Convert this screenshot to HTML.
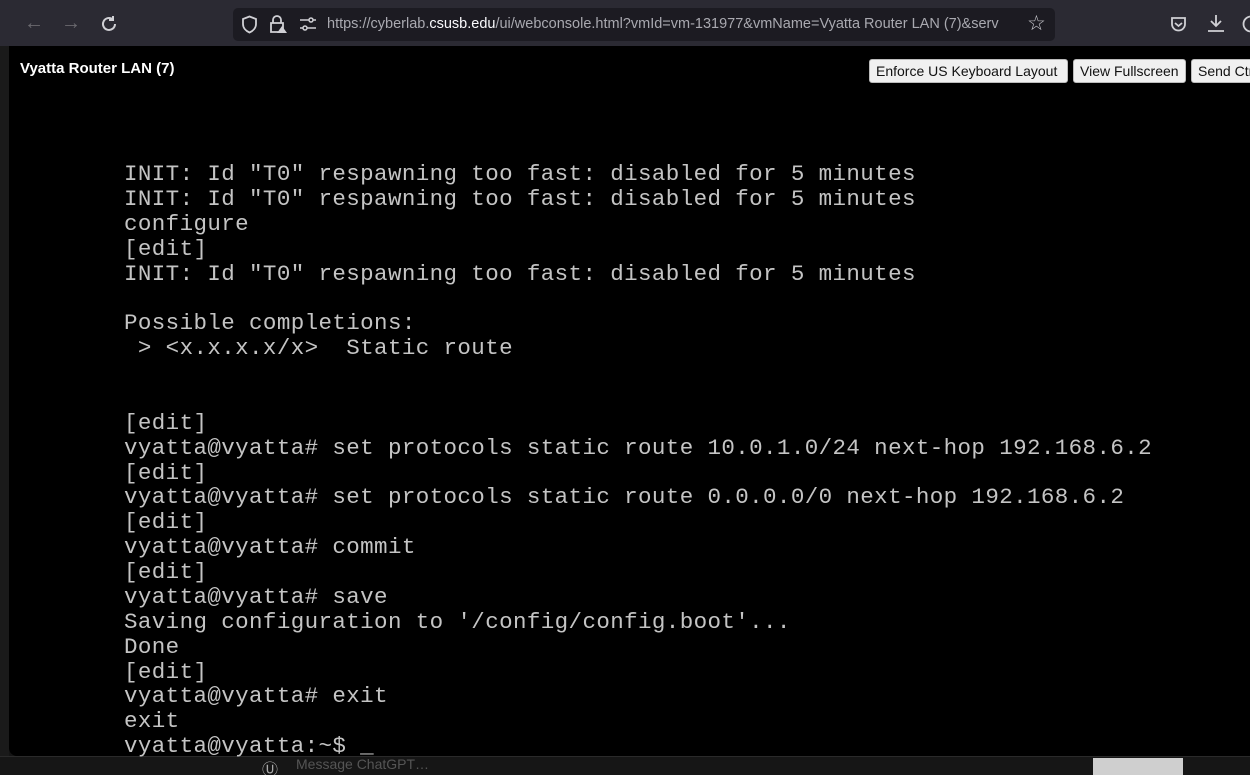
<!DOCTYPE html>
<html><head><meta charset="utf-8"><style>
*{margin:0;padding:0;box-sizing:border-box}
html,body{width:1250px;height:775px;overflow:hidden}
body{background:#141414;position:relative;font-family:"Liberation Sans",sans-serif}
.tb{position:absolute;left:0;top:0;width:1250px;height:46px;background:#2b2a33}
.url{position:absolute;left:233px;top:8px;width:822px;height:33px;background:#1c1b22;border-radius:5px;color:#a9a9b0;font-size:14.5px;line-height:33px;padding-left:94px;white-space:nowrap;overflow:hidden}
.url b{color:#fbfbfe;font-weight:normal}
.ic{position:absolute;color:#c9c9cf}
.win{position:absolute;left:9px;top:46px;width:1241px;height:710px;background:#000;border-bottom-left-radius:8px}
.title{position:absolute;left:20px;top:60px;color:#fff;font-weight:bold;font-size:15px}
.btn{position:absolute;top:59px;height:24px;background:#f0f0f0;border:1px solid #bbb;border-radius:3px;font-size:14px;line-height:22px;padding:0 6px;color:#111;white-space:nowrap;overflow:hidden}
pre{position:absolute;left:124px;top:162px;font-family:"Liberation Mono",monospace;font-size:22.5px;line-height:24.87px;color:#c4c4c4;letter-spacing:0.39px}
.side{position:absolute;left:0;top:46px;width:9px;height:710px;background:#1a1a1a}
.bot{position:absolute;left:0;top:756px;width:1250px;height:19px;background:#161616;border-top:1px solid #2a2a2a;overflow:hidden}
</style></head><body>
<div class="tb">
<div class="ic" style="left:24px;top:12px;font-size:20px;color:#6b6a70">←</div>
<div class="ic" style="left:61px;top:12px;font-size:20px;color:#6b6a70">→</div>
<svg class="ic" style="left:100px;top:15px" width="18" height="18" viewBox="0 0 18 18"><path d="M15 9a6 6 0 1 1-2-4.5M13 1v4h-4" fill="none" stroke="#d0d0d5" stroke-width="2"/></svg>
<div class="url">https://cyberlab.<b>csusb.edu</b>/ui/webconsole.html?vmId=vm-131977&amp;vmName=Vyatta Router LAN (7)&amp;serv</div>
<svg class="ic" style="left:241px;top:15px" width="17" height="19" viewBox="0 0 17 19"><path d="M8.5 1.5L2 4v5c0 4 3 7 6.5 8.5C12 16 15 13 15 9V4z" fill="none" stroke="#d0d0d5" stroke-width="1.8"/></svg>
<svg class="ic" style="left:268px;top:14px" width="20" height="20" viewBox="0 0 20 20"><path d="M5 9V6a4 4 0 0 1 8 0v3M3 9h12v9H3z" fill="none" stroke="#d0d0d5" stroke-width="1.8"/><path d="M14 12l5 7h-10z" fill="#d0d0d5"/></svg>
<svg class="ic" style="left:299px;top:17px" width="18" height="14" viewBox="0 0 18 14"><path d="M1 3h9M14 3h3M1 11h3M8 11h9" stroke="#d0d0d5" stroke-width="1.6"/><circle cx="12" cy="3" r="2" fill="none" stroke="#d0d0d5" stroke-width="1.5"/><circle cx="6" cy="11" r="2" fill="none" stroke="#d0d0d5" stroke-width="1.5"/></svg>
<div class="ic" style="left:1027px;top:11px;font-size:21px">☆</div>
<svg class="ic" style="left:1170px;top:16px" width="17" height="16" viewBox="0 0 17 16"><path d="M2 2h13v6a6.5 6.5 0 0 1-13 0z" fill="none" stroke="#d0d0d5" stroke-width="1.8"/><path d="M5 7l3.5 3L12 7" fill="none" stroke="#d0d0d5" stroke-width="1.8"/></svg>
<svg class="ic" style="left:1207px;top:14px" width="18" height="19" viewBox="0 0 18 19"><path d="M9 1v11M4 7l5 5 5-5M1 17h16" fill="none" stroke="#d0d0d5" stroke-width="1.8"/></svg>
<svg class="ic" style="left:1242px;top:15px" width="10" height="18" viewBox="0 0 10 18"><circle cx="9" cy="9" r="7.5" fill="none" stroke="#d0d0d5" stroke-width="1.8"/></svg>
</div>
<div class="side"></div>
<div class="bot"><div style="position:absolute;left:262px;top:-1px;color:#aaa;font-size:16px">Ⓤ</div><div style="position:absolute;left:296px;top:-1px;color:#555;font-size:14px">Message ChatGPT…</div><div style="position:absolute;left:1093px;top:1px;width:90px;height:19px;background:#cfcfcf"></div></div>
<div class="win"></div>
<div class="title">Vyatta Router LAN (7)</div>
<div class="btn" style="left:869px;width:199px">Enforce US Keyboard Layout</div>
<div class="btn" style="left:1073px;width:113px">View Fullscreen</div>
<div class="btn" style="left:1191px;width:70px">Send Ctrl+Alt+Del</div>
<pre>INIT: Id "T0" respawning too fast: disabled for 5 minutes
INIT: Id "T0" respawning too fast: disabled for 5 minutes
configure
[edit]
INIT: Id "T0" respawning too fast: disabled for 5 minutes

Possible completions:
 &gt; &lt;x.x.x.x/x&gt;  Static route


[edit]
vyatta@vyatta# set protocols static route 10.0.1.0/24 next-hop 192.168.6.2
[edit]
vyatta@vyatta# set protocols static route 0.0.0.0/0 next-hop 192.168.6.2
[edit]
vyatta@vyatta# commit
[edit]
vyatta@vyatta# save
Saving configuration to '/config/config.boot'...
Done
[edit]
vyatta@vyatta# exit
exit
vyatta@vyatta:~$ _</pre>
</body></html>
